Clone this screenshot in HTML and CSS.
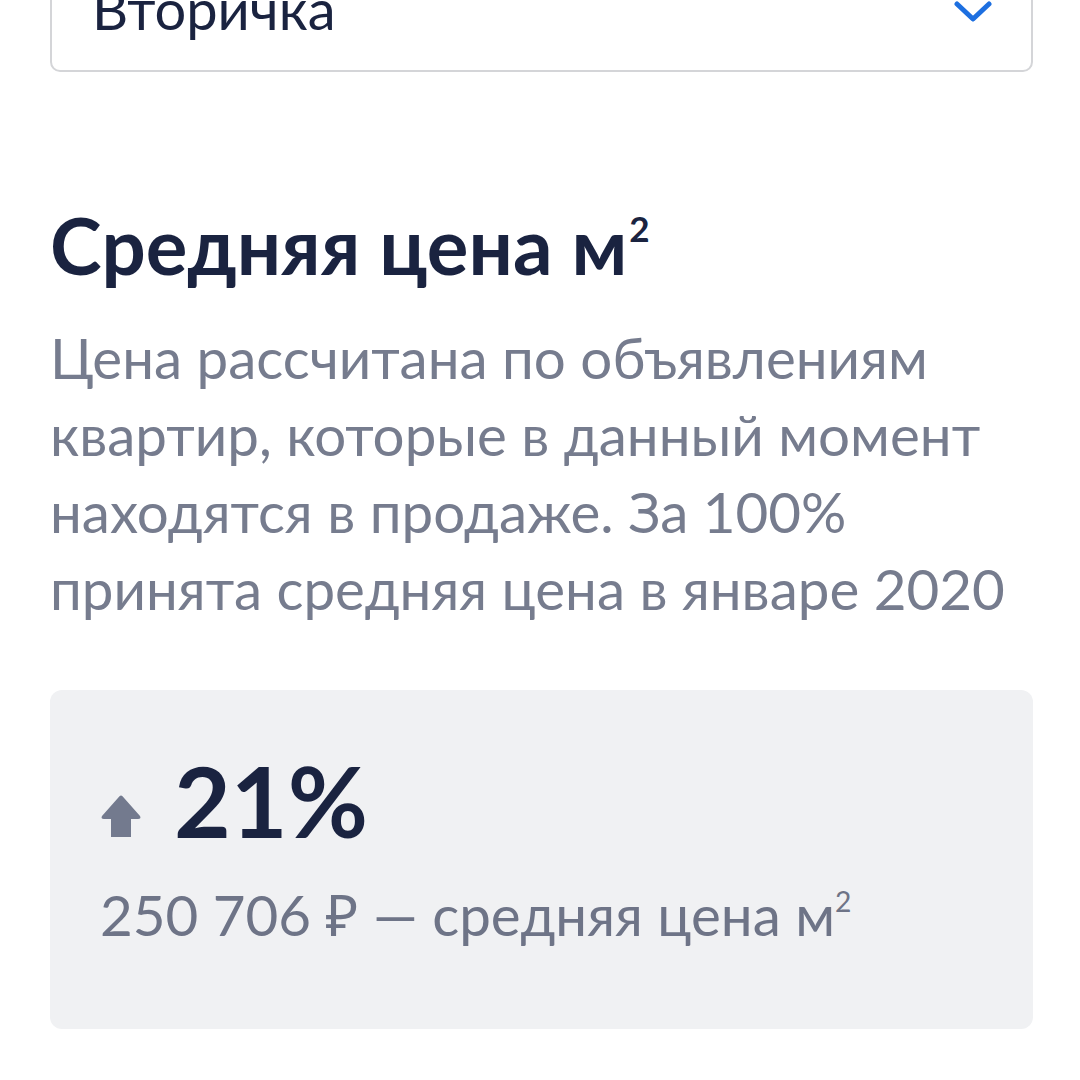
FILE: index.html
```html
<!DOCTYPE html>
<html>
<head>
    <title>Средняя цена</title>
    <link rel="stylesheet" href="styles.css">
</head>
<body>
    <div class="page">
        <div class="select-box">
            <span class="select-value">Вторичка</span>
            <svg class="chevron" width="40" height="24" viewBox="0 0 40 24">
                <path d="M3 3 L19 18 L35 3" fill="none" stroke="#1d6fe0" stroke-width="5" stroke-linecap="round" stroke-linejoin="round"/>
            </svg>
        </div>

        <h1 class="title">Средняя цена м<sup>2</sup></h1>
        <p class="description">
            Цена рассчитана по объявлениям квартир, которые в данный момент находятся в продаже. За 100% принята средняя цена в январе 2020
        </p>

        <div class="stat-card">
            <div class="stat-row">
                <svg class="arrow" width="42" height="42" viewBox="0 0 42 42">
                    <path d="M19.5 1.2 Q21 0 22.5 1.2 L40 21 Q41.5 24 38 24 L31 24 L31 42 L11 42 L11 24 L4 24 Q0.5 24 2 21 Z" fill="#737a8e"/>
                </svg>
                <span class="stat-value">21%</span>
            </div>
            <div class="stat-caption">250 706 ₽ — средняя цена м<sup>2</sup></div>
        </div>
    </div>
</body>
</html>
```

FILE: styles.css
```css
body {
    margin: 0;
    background-color: #fff;
    font-family: Lato, "Noto Sans", sans-serif;
}

.page {
    width: 983px;
    padding-left: 50px;
}

.select-box {
    margin-top: -56px;
    height: 124px;
    border: 2px solid #d4d5d8;
    border-radius: 10px;
    display: flex;
    align-items: center;
    justify-content: space-between;
    padding: 0 37px 0 40px;
}

.select-value {
    font-size: 56px;
    color: #1a2340;
}

.chevron {
    margin-top: 10px;
}

.title {
    margin: 134px 0 0 0;
    font-size: 78px;
    font-weight: 700;
    line-height: 1;
    color: #1a2340;
}

.title sup {
    font-size: 0.45em;
    vertical-align: 0.95em;
    margin-left: 2px;
}

.description {
    margin: 35px 0 0 0;
    font-size: 56.5px;
    line-height: 77px;
    color: #767c8e;
}

.stat-card {
    margin-top: 63px;
    background-color: #f0f1f3;
    border-radius: 12px;
    padding: 61px 50px 86px 50px;
}

.stat-row {
    display: flex;
    align-items: flex-end;
    gap: 32px;
}

.arrow {
    margin-bottom: 12px;
}

.stat-value {
    font-size: 98px;
    font-weight: 700;
    line-height: 1;
    color: #1a2340;
}

.stat-caption {
    margin-top: 37px;
    font-size: 56.5px;
    line-height: 1;
    color: #6e7487;
}

.stat-caption sup {
    font-size: 0.5em;
    vertical-align: 0.85em;
}
```
